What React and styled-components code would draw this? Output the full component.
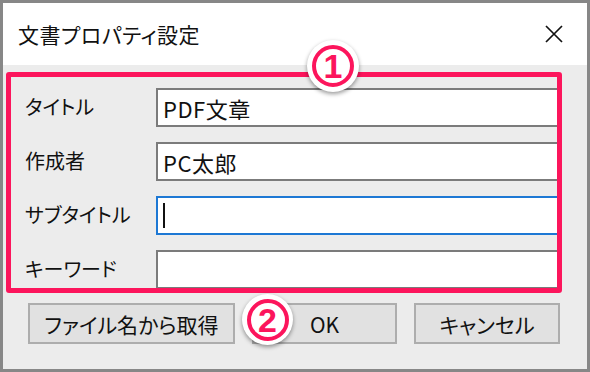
import React from 'react';
import styled, { createGlobalStyle } from 'styled-components';

const PINK = '#fc155c';

const GlobalStyle = createGlobalStyle`
  html, body {
    margin: 0;
    padding: 0;
    background: #fff;
  }
  body {
    font-family: "Noto Sans CJK JP", "Noto Sans", sans-serif;
  }
`;

const fields = [
  { label: 'タイトル', value: 'PDF文章' },
  { label: '作成者', value: 'PC太郎' },
  { label: 'サブタイトル', value: '', focused: true },
  { label: 'キーワード', value: '' },
];

const App = () => {
  return (
    <>
      <GlobalStyle />
      <Window>
        <TitleBar>
          <Title>文書プロパティ設定</Title>
          <CloseIcon width="20" height="20" viewBox="0 0 20 20">
            <path d="M2 2 L18 18 M18 2 L2 18" stroke="#111" strokeWidth="1.7" fill="none" />
          </CloseIcon>
        </TitleBar>
        <Body>
          <Form>
            {fields.map(f => (
              <Row key={f.label}>
                <Label>{f.label}</Label>
                <Field $focused={f.focused}>
                  {f.value}
                  {f.focused && <Caret />}
                </Field>
              </Row>
            ))}
          </Form>
          <ButtonRow>
            <Button $w={207}>ファイル名から取得</Button>
            <Button $w={145}>OK</Button>
            <Button $w={146}>キャンセル</Button>
          </ButtonRow>
        </Body>

        <Highlight />
        <Badge $x={304} $y={37} $size={52}>
          <BadgeRing>1</BadgeRing>
        </Badge>
        <Badge $x={239} $y={291} $size={51}>
          <BadgeRing>2</BadgeRing>
        </Badge>
      </Window>
    </>
  );
};

export default App;

const Window = styled.div`
  position: relative;
  width: 590px;
  height: 372px;
  box-sizing: border-box;
  border: 3px solid #878787;
  background: #ececec;
  display: flex;
  flex-direction: column;
  overflow: hidden;
`;

const TitleBar = styled.div`
  height: 62px;
  background: #fff;
  display: flex;
  align-items: center;
  justify-content: space-between;
  padding: 0 23px 0 15px;
`;

const Title = styled.div`
  font-size: 21px;
  color: #111;
  font-feature-settings: 'palt';
  letter-spacing: 0.5px;
`;

const CloseIcon = styled.svg`
  display: block;
`;

const Body = styled.div`
  display: flex;
  flex-direction: column;
  padding: 23px 27px 0 22px;
`;

const Form = styled.div`
  display: flex;
  flex-direction: column;
  gap: 15px;
`;

const Row = styled.div`
  display: grid;
  grid-template-columns: 131px 1fr;
  align-items: center;
`;

const Label = styled.div`
  font-size: 20px;
  color: #111;
  font-feature-settings: 'palt';
  padding-bottom: 2px;
`;

const Field = styled.div`
  height: 39px;
  box-sizing: border-box;
  border: 2px solid ${({ $focused }) => ($focused ? '#1d78d4' : '#7b7b7b')};
  background: #fff;
  padding: 0 5px;
  display: flex;
  align-items: center;
  font-size: 22px;
  letter-spacing: 0.5px;
  color: #111;
`;

const Caret = styled.span`
  display: block;
  width: 2px;
  height: 25px;
  background: #111;
`;

const ButtonRow = styled.div`
  display: flex;
  gap: 17px;
  margin-top: 14px;
  padding-left: 3px;
`;

const Button = styled.div`
  width: ${({ $w }) => $w}px;
  height: 41px;
  box-sizing: border-box;
  background: #e1e1e1;
  border: 2px solid #adadad;
  display: flex;
  align-items: center;
  justify-content: center;
  font-size: 21px;
  color: #111;
  font-feature-settings: 'palt';
`;

const Highlight = styled.div`
  position: absolute;
  left: 3px;
  top: 69px;
  width: 556px;
  height: 221px;
  box-sizing: border-box;
  border: 5px solid ${PINK};
  border-radius: 3px;
`;

const Badge = styled.div`
  position: absolute;
  left: ${({ $x }) => $x}px;
  top: ${({ $y }) => $y}px;
  width: ${({ $size }) => $size}px;
  height: ${({ $size }) => $size}px;
  border-radius: 50%;
  background: #fff;
  box-shadow: 0 2px 4px rgba(0, 0, 0, 0.4);
  display: flex;
  align-items: center;
  justify-content: center;
`;

const BadgeRing = styled.div`
  width: 42px;
  height: 42px;
  box-sizing: border-box;
  border: 4px solid ${PINK};
  border-radius: 50%;
  display: flex;
  align-items: center;
  justify-content: center;
  color: ${PINK};
  font-family: "Liberation Sans", Arial, sans-serif;
  font-weight: 700;
  font-size: 34px;
  line-height: 1;
`;
